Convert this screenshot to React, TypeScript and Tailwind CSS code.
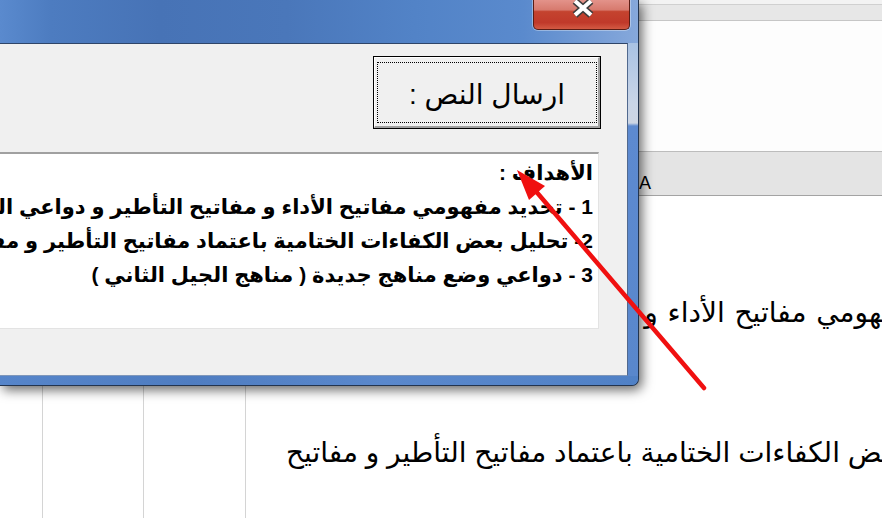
import React from "react";

const FONT = "font-['Liberation_Sans','DejaVu_Sans',sans-serif]";

function CloseX() {
  return (
    <svg width="24" height="22" viewBox="0 0 24 22" className="absolute left-[37px] top-[-3px]">
      <path d="M4 4 L20 18 M20 4 L4 18" stroke="#3d3d3d" strokeWidth="7" fill="none" />
      <path d="M4 4 L20 18 M20 4 L4 18" stroke="#ffffff" strokeWidth="4" fill="none" />
    </svg>
  );
}

function Dialog() {
  return (
    <div className="absolute left-0 top-0 w-[639px] h-[386px] flex flex-col rounded-br-[7px] border-r border-b border-[#22344f] shadow-[3px_4px_12px_rgba(0,0,0,0.6)] bg-[#5784c8]">
      <div className="relative h-[43px] shrink-0 bg-[linear-gradient(90deg,#5a8ace_0%,#4d7cc0_8%,#4773b6_25%,#4a77ba_45%,#5283c7_65%,#5a8acd_82%,#86a8db_100%)]">
        <div className="absolute right-[8px] top-0 w-[97px] h-[30px] rounded-b-[5px] border border-t-0 border-[#5a1d15] bg-[linear-gradient(180deg,#e3938a_0%,#d77a6e_34%,#c4432f_40%,#c0392a_78%,#d35a43_100%)] shadow-[0_0_0_1px_rgba(255,255,255,0.35)]">
          <CloseX />
        </div>
      </div>
      <div className="flex flex-1 min-h-0">
        <div className="flex-1 min-w-0 overflow-hidden bg-[#f0f0f0] border-t border-r border-b border-t-[#2f4568] border-r-[#51698e] border-b-[#7f97ba] flex flex-col items-end">
          <div className="mt-[12px] mr-[26px] w-[228px] h-[73px] border border-black bg-[#f0f0f0]">
            <div className="h-full w-full border-t border-l border-r-2 border-b-2 border-t-white border-l-white border-r-[#a0a0a0] border-b-[#a0a0a0] pt-[4px] pl-[2px] pr-[1px] pb-[3px]">
              <div className="h-full w-full border border-dotted border-black flex items-center justify-center pt-[4px]">
                <span dir="rtl" className={`${FONT} text-[28px] leading-[32px] text-black`}>ارسال النص :</span>
              </div>
            </div>
          </div>
          <div className="mt-[23px] mr-[28px] self-stretch ml-[-6px] h-[177px] bg-white border-t-2 border-t-[#a0a0a0] border-r border-r-[#e3e3e3] border-b border-b-[#e3e3e3] overflow-hidden">
            <div dir="rtl" className={`${FONT} font-bold text-[21px] leading-[34px] text-black pr-[5px] pt-[2px] whitespace-nowrap text-right`}>
              <div>الأهداف :</div>
              <div>1 - تحديد مفهومي مفاتيح الأداء و مفاتيح التأطير و دواعي العمل بها</div>
              <div>2- تحليل بعض الكفاءات الختامية باعتماد مفاتيح التأطير و مفاتيح الأداء</div>
              <div>3 - دواعي وضع مناهج جديدة ( مناهج الجيل الثاني )</div>
            </div>
          </div>
        </div>
        <div className="w-[10px] shrink-0 bg-[linear-gradient(180deg,#a9c2e3_0px,#c9d5e7_60px,#cdd6e4_80px,#5d8ad0_83px,#5987cc_100%)]" />
      </div>
      <div className="h-[9px] shrink-0 bg-[linear-gradient(90deg,#5685ca_0%,#4f7dc1_30%,#5a88cc_60%,#5081c6_100%)] rounded-br-[6px]" />
    </div>
  );
}

function Sheet() {
  return (
    <div className="flex flex-col w-full h-full bg-white">
      <div className="h-[5px] shrink-0 bg-[#f3f3f3] border-b border-[#d0d0d0]" />
      <div className="h-[16px] shrink-0 bg-[#e7e7e7] border-b border-[#c6c6c6]" />
      <div className="h-[130px] shrink-0 bg-[#fdfdfd]" />
      <div className={`h-[45px] shrink-0 bg-[#e4e4e4] border-t border-t-[#bcbcbc] border-b border-b-[#a3a3a3] pl-[639px] pt-[21px] ${FONT} text-[18px] leading-[20px] text-black`}>
        A
      </div>
      <div className="flex flex-1 min-h-0">
        <div className="w-[43px] shrink-0 border-r border-[#d4d4d4]" />
        <div className="w-[101px] shrink-0 border-r border-[#d4d4d4]" />
        <div className="w-[102px] shrink-0 border-r border-[#d4d4d4]" />
        <div dir="rtl" className={`flex-1 min-w-0 overflow-hidden ${FONT} text-[28px] leading-[36px] text-black whitespace-nowrap text-right`}>
          <div className="mt-[99px] [word-spacing:2px]">{"\u200Dهومي مفاتيح الأداء و"}</div>
          <div className="mt-[104px]">{"\u200Dض الكفاءات الختامية باعتماد مفاتيح التأطير و مفاتيح"}</div>
        </div>
      </div>
    </div>
  );
}

function Arrow() {
  return (
    <svg className="absolute left-0 top-0 pointer-events-none" width="882" height="518" viewBox="0 0 882 518">
      <line x1="704" y1="388" x2="534" y2="189" stroke="#f01010" strokeWidth="4.5" strokeLinecap="round" />
      <polygon points="517,170 545,186 529,200" fill="#f01010" />
    </svg>
  );
}

export default function App() {
  return (
    <div className="relative w-[882px] h-[518px] overflow-hidden bg-white">
      <Sheet />
      <Dialog />
      <Arrow />
    </div>
  );
}
